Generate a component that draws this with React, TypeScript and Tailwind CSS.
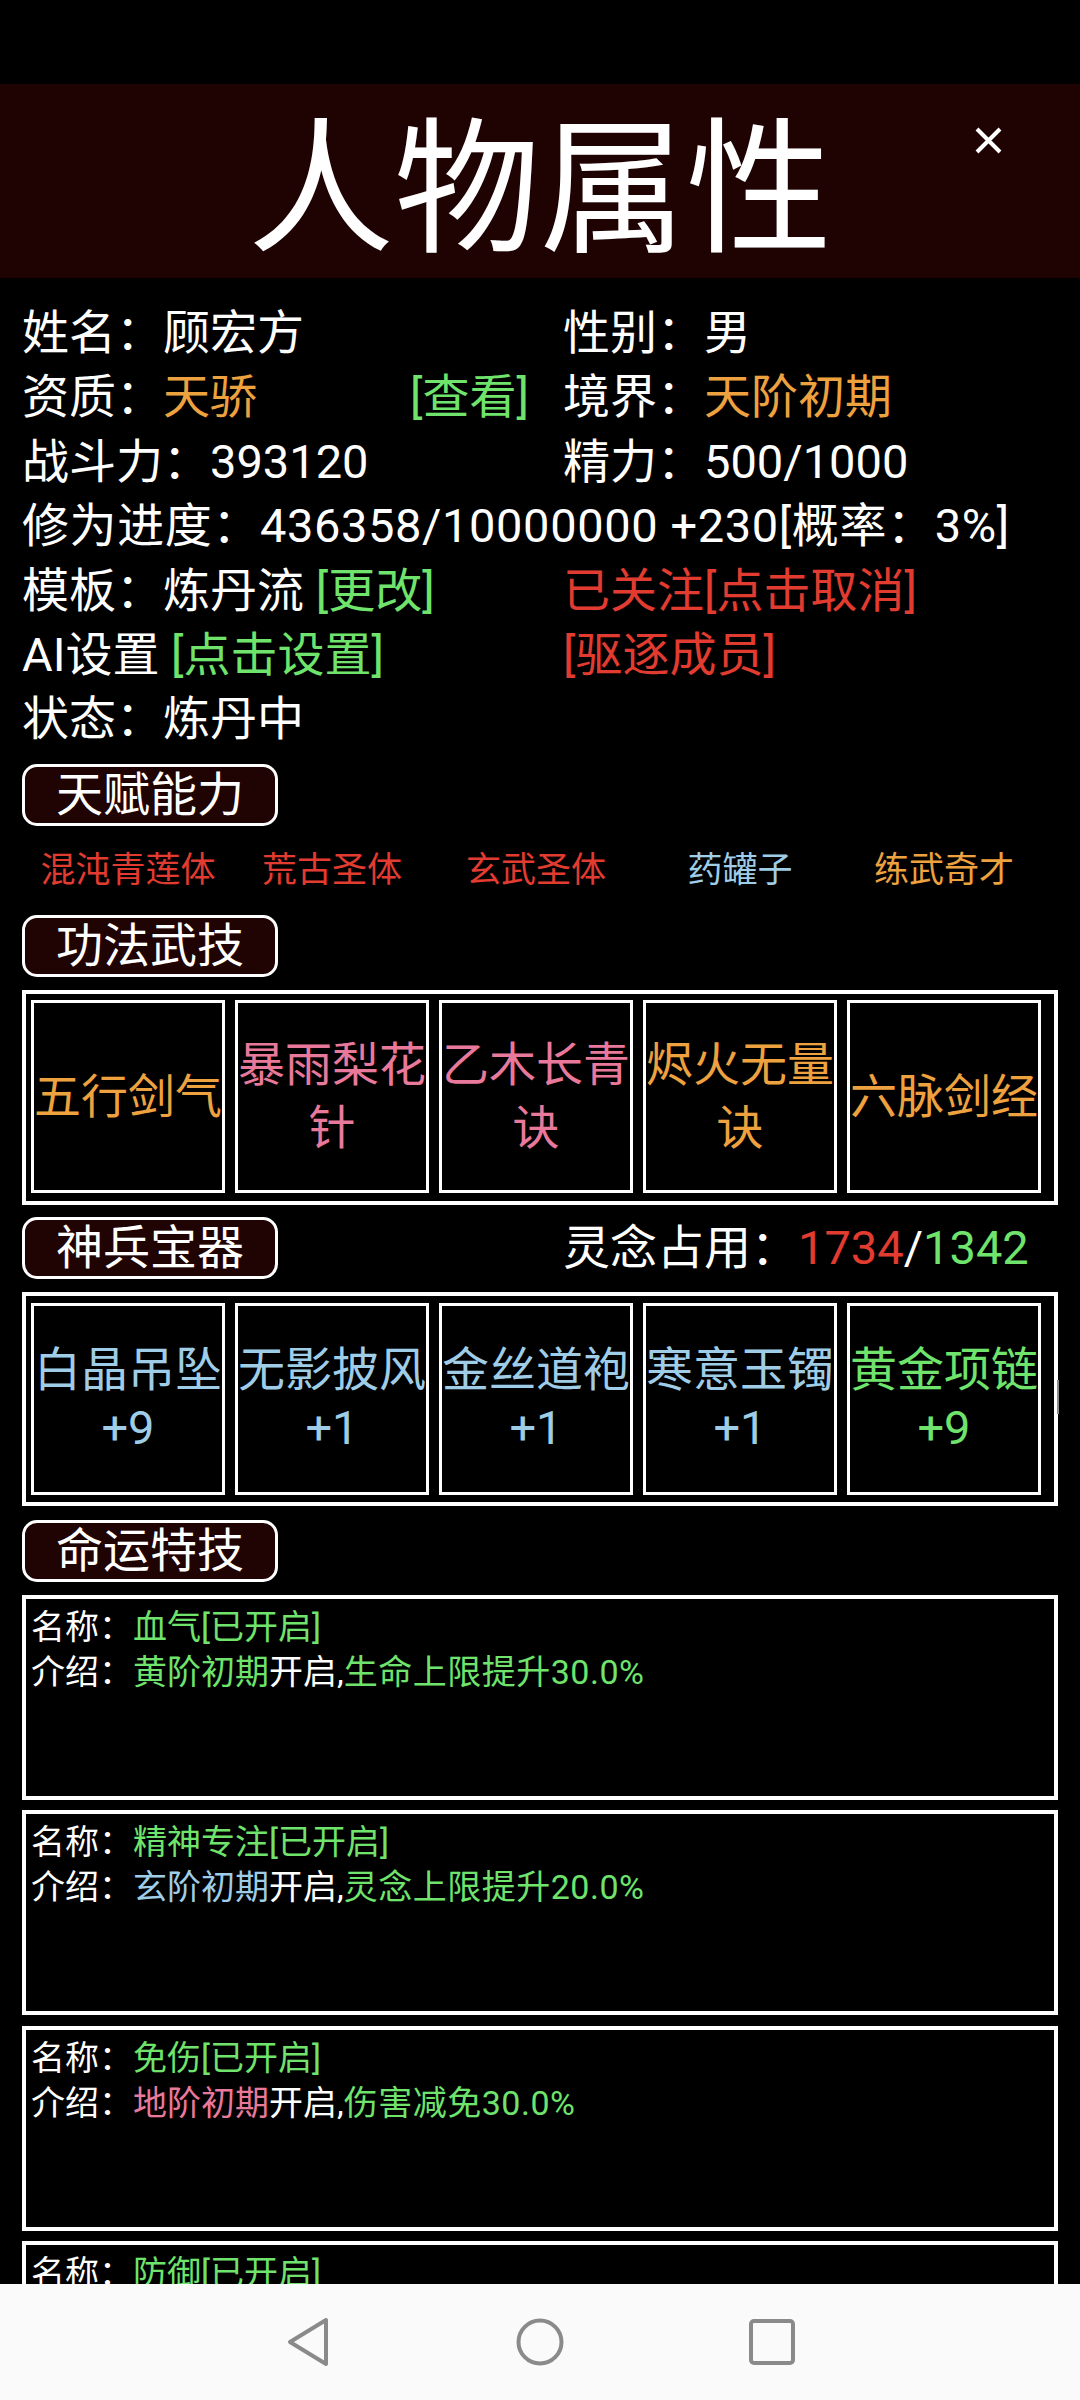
import React from "react";

const ORANGE = "text-[#eda13f]";
const RED = "text-[#e23b30]";
const GREEN = "text-[#6fe36c]";
const BLUE = "text-[#9fcce6]";
const PINK = "text-[#e9799b]";

const talents = [
  { name: "混沌青莲体", color: RED },
  { name: "荒古圣体", color: RED },
  { name: "玄武圣体", color: RED },
  { name: "药罐子", color: BLUE },
  { name: "练武奇才", color: ORANGE },
];

const skills = [
  { name: "五行剑气", color: ORANGE },
  { name: "暴雨梨花针", color: PINK },
  { name: "乙木长青诀", color: PINK },
  { name: "烬火无量诀", color: ORANGE },
  { name: "六脉剑经", color: ORANGE },
];

const gear = [
  { name: "白晶吊坠", level: "+9", color: BLUE },
  { name: "无影披风", level: "+1", color: BLUE },
  { name: "金丝道袍", level: "+1", color: BLUE },
  { name: "寒意玉镯", level: "+1", color: BLUE },
  { name: "黄金项链", level: "+9", color: GREEN },
];

const fates = [
  { name: "血气", tier: "黄阶初期", tierColor: GREEN, effect: "生命上限提升30.0%" },
  { name: "精神专注", tier: "玄阶初期", tierColor: BLUE, effect: "灵念上限提升20.0%" },
  { name: "免伤", tier: "地阶初期", tierColor: PINK, effect: "伤害减免30.0%" },
  { name: "防御", tier: "地阶初期", tierColor: PINK, effect: "防御提升30.0%" },
];

const SectionBadge = ({ label }: { label: string }) => (
  <div className="w-[256px] h-[62px] rounded-[15px] border-[3px] border-white bg-[#200303] flex items-center justify-center text-[47px] leading-none">
    {label}
  </div>
);

const FateCard = ({ fate }: { fate: (typeof fates)[number] }) => (
  <div className="h-[205px] border-4 border-white pt-[6px] pl-[5px] text-[34px] leading-[45px] mb-[10.5px]">
    <div>
      名称：<span className={GREEN}>{fate.name}[已开启]</span>
    </div>
    <div>
      介绍：<span className={fate.tierColor}>{fate.tier}</span>开启,
      <span className={`${GREEN} tracking-[0.5px]`}>{fate.effect}</span>
    </div>
  </div>
);

export default function App() {
  return (
    <div className="w-[1080px] h-[2400px] flex flex-col overflow-hidden bg-black text-white font-[Roboto,'Noto_Sans_CJK_SC',sans-serif]">
      <div className="h-[84px] shrink-0 bg-black" />

      <header className="relative h-[194px] shrink-0 bg-[#1f0303] flex items-center justify-center pt-[20px]">
        <h1 className="text-[146px] leading-none">人物属性</h1>
        <button className="absolute left-[975px] top-[43px] w-[27px] h-[27px]">
          <svg viewBox="0 0 27 27" className="w-full h-full">
            <path d="M2 2 L25 25 M25 2 L2 25" stroke="white" strokeWidth="4" />
          </svg>
        </button>
      </header>

      <main className="flex-1 min-h-0 overflow-hidden px-[22px]">
        <section className="mt-[23px] grid grid-cols-[541px_1fr] text-[47px] leading-[64.4px]">
          <div>姓名：顾宏方</div>
          <div>性别：男</div>
          <div className="flex justify-between pr-[34px]">
            <span>
              资质：<span className={ORANGE}>天骄</span>
            </span>
            <span className={GREEN}>[查看]</span>
          </div>
          <div>
            境界：<span className={ORANGE}>天阶初期</span>
          </div>
          <div>战斗力：393120</div>
          <div>精力：500/1000</div>
          <div className="col-span-2 whitespace-nowrap tracking-[0.6px]">
            修为进度：436358/10000000 +230[概率：3%]
          </div>
          <div>
            模板：炼丹流 <span className={GREEN}>[更改]</span>
          </div>
          <div className={RED}>已关注[点击取消]</div>
          <div>
            AI设置 <span className={GREEN}>[点击设置]</span>
          </div>
          <div className={RED}>[驱逐成员]</div>
          <div>状态：炼丹中</div>
        </section>

        <div className="mt-[12px]">
          <SectionBadge label="天赋能力" />
        </div>
        <div className="h-[89px] ml-[4px] w-[1020px] grid grid-cols-5 items-center text-center text-[35px] leading-none">
          {talents.map((t) => (
            <span key={t.name} className={t.color}>
              {t.name}
            </span>
          ))}
        </div>

        <SectionBadge label="功法武技" />
        <div className="mt-[13px] h-[215px] border-4 border-white pt-[6px] pl-[5px] flex gap-[10px]">
          {skills.map((s) => (
            <div
              key={s.name}
              className={`w-[194px] h-[193px] shrink-0 border-[3px] border-white flex items-center justify-center text-center text-[47px] leading-[63px] ${s.color}`}
            >
              <span className="w-[190px] shrink-0">{s.name}</span>
            </div>
          ))}
        </div>

        <div className="mt-[12px] flex items-center">
          <div className="w-[541px]">
            <SectionBadge label="神兵宝器" />
          </div>
          <div className="text-[47px] leading-none">
            灵念占用：<span className={RED}>1734</span>/<span className={GREEN}>1342</span>
          </div>
        </div>
        <div className="relative mt-[13px] h-[214px] border-4 border-white pt-[7px] pl-[5px] flex gap-[10px]">
          {gear.map((g) => (
            <div
              key={g.name}
              className={`w-[194px] h-[192px] shrink-0 border-[3px] border-white flex flex-col items-center justify-center text-center text-[47px] leading-[58px] ${g.color}`}
            >
              <span className="w-[190px] shrink-0">{g.name}</span>
              <span>{g.level}</span>
            </div>
          ))}
          <div className="absolute right-[-5px] top-[84px] w-[2px] h-[34px] bg-[#8a8a8a]" />
        </div>

        <div className="mt-[14px]">
          <SectionBadge label="命运特技" />
        </div>
        <div className="mt-[13px]">
          {fates.map((f) => (
            <FateCard key={f.name} fate={f} />
          ))}
        </div>
      </main>

      <nav className="h-[116px] shrink-0 bg-[#fafafa] flex items-center justify-center">
        <div className="w-[232px] flex justify-center">
          <svg width="44" height="50" viewBox="0 0 44 50">
            <path d="M40 3 L4 25 L40 47 Z" fill="none" stroke="#8a8a8a" strokeWidth="4" strokeLinejoin="round" />
          </svg>
        </div>
        <div className="w-[232px] flex justify-center">
          <svg width="50" height="50" viewBox="0 0 50 50">
            <circle cx="25" cy="25" r="21.5" fill="none" stroke="#8a8a8a" strokeWidth="4" />
          </svg>
        </div>
        <div className="w-[232px] flex justify-center">
          <svg width="48" height="48" viewBox="0 0 48 48">
            <rect x="3" y="3" width="42" height="42" rx="3" fill="none" stroke="#8a8a8a" strokeWidth="4" />
          </svg>
        </div>
      </nav>
    </div>
  );
}
